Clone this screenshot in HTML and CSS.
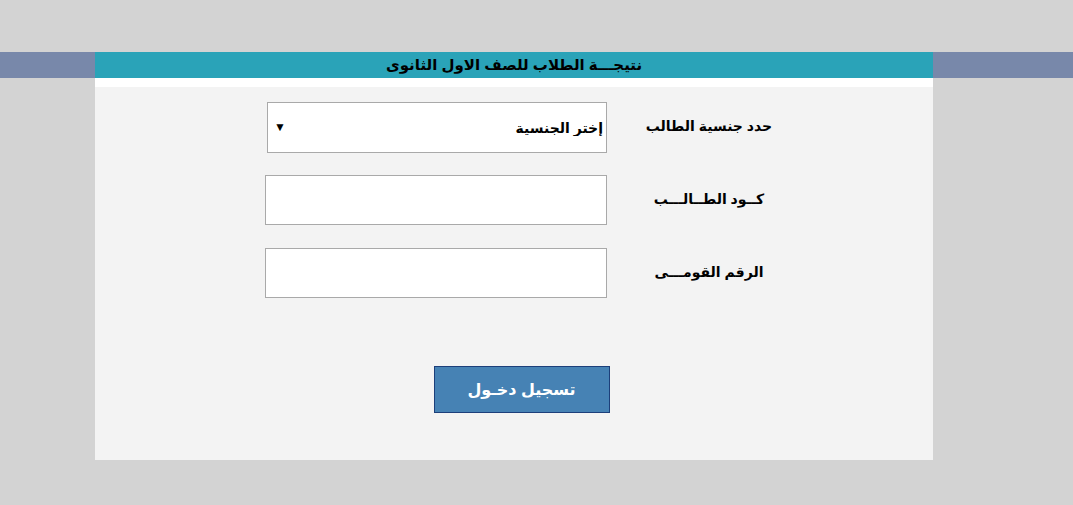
FILE: index.html
```html
<!DOCTYPE html>
<html lang="ar" dir="rtl">
<head>
    <meta charset="UTF-8">
    <meta name="viewport" content="width=device-width, initial-scale=1.0">
    <title>نتيجة الطلاب</title>
    <link rel="stylesheet" href="styles.css">
</head>
<body>
    <div class="band">
        <div class="band-inner">
            <h1 class="title">نتيجـــة الطلاب للصف الاول الثانوى</h1>
        </div>
    </div>

    <div class="page">
        <div class="white-strip"></div>
        <form class="panel">
            <div class="row row-first">
                <label for="nation" class="lbl">حدد جنسية الطالب</label>
                <div class="select-box">
                    <select id="nation">
                        <option>إختر الجنسية</option>
                        <option>مصرى</option>
                        <option>وافد</option>
                    </select>
                    <span class="arrow">▼</span>
                </div>
            </div>

            <div class="row">
                <label for="code" class="lbl">كــود الطــالـــب</label>
                <input type="text" id="code" class="field">
            </div>

            <div class="row">
                <label for="nid" class="lbl">الرقم القومـــى</label>
                <input type="text" id="nid" class="field">
            </div>

            <div class="actions">
                <button type="button" class="btn">تسجيل دخـول</button>
            </div>
        </form>
    </div>
</body>
</html>
```

FILE: styles.css
```css
body {
    margin: 0;
    background-color: #d3d3d3;
    font-family: Arial, "DejaVu Sans", sans-serif;
    padding-top: 52px;
}

.band {
    background-color: #7888aa;
    height: 26px;
}

.band-inner {
    width: 838px;
    height: 26px;
    margin-right: 140px;
    background-color: #2aa3b8;
    display: flex;
    align-items: center;
    justify-content: center;
}

.title {
    margin: 0;
    font-size: 15px;
    font-weight: bold;
    color: #000;
    line-height: 26px;
}

.page {
    width: 838px;
    margin-right: 140px;
}

.white-strip {
    height: 9px;
    background-color: #fff;
}

.panel {
    background-color: #f3f3f3;
    padding: 15px 124px 48px 0;
    height: 373px;
    box-sizing: border-box;
}

.row {
    display: grid;
    grid-template-columns: 200px 342px;
    column-gap: 2px;
    align-items: center;
    margin-bottom: 23px;
}

.row-first {
    margin-bottom: 22px;
}

.lbl {
    text-align: center;
    font-size: 14px;
    font-weight: bold;
    color: #000;
    padding-bottom: 3px;
}

.select-box {
    position: relative;
    width: 340px;
    height: 51px;
}

.select-box select {
    appearance: none;
    width: 100%;
    height: 100%;
    background-color: #fff;
    border: 1px solid #a9a9a9;
    font-family: inherit;
    font-size: 14px;
    font-weight: bold;
    color: #000;
    padding: 0 3px 0 20px;
    margin: 0;
}

.arrow {
    position: absolute;
    left: 7px;
    top: 18px;
    font-size: 12px;
    color: #000;
    pointer-events: none;
}

.field {
    width: 342px;
    height: 50px;
    box-sizing: border-box;
    border: 1px solid #a9a9a9;
    background-color: #fff;
    margin: 0;
}

.actions {
    display: flex;
    justify-content: center;
    padding-top: 45px;
    padding-left: 139px;
}

.btn {
    width: 176px;
    height: 47px;
    background-color: #4682b4;
    border: 1px solid #1c3f7a;
    color: #fff;
    font-family: inherit;
    font-size: 16px;
    font-weight: bold;
    cursor: pointer;
}

.btn:hover {
    background-color: #3d74a3;
}
```
